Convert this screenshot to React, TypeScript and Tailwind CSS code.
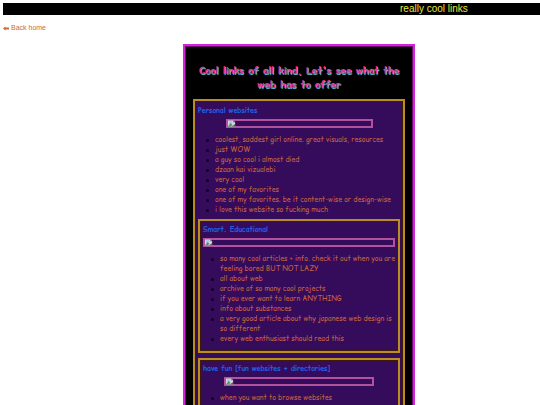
import React from "react";

function BrokenImage({ width }: { width: string }) {
  return (
    <div role="img" aria-label="button" className={`mx-auto h-[9px] border-2 border-[#b0529d] ${width}`}>
      <svg viewBox="0 0 9 7" className="block h-[7px] w-[8px] -mt-px">
        <path d="M0 0H6L8 2V7H0Z" fill="#d5dadd" />
        <path d="M1 1H5V3L3 4H1Z" fill="#a9c6ef" />
        <path d="M0 7L3 3L5 5L3 7Z" fill="#4b9954" />
        <path d="M6 0L8 2H6ZM4 7L8 4V7Z" fill="#58606a" />
      </svg>
    </div>
  );
}

function Links({ items }: { items: string[][] }) {
  return (
    <ul className="mt-[7px] list-none pl-[17px]">
      {items.map((lines) => (
        <li key={lines[0]} className="relative text-[7px] leading-[10px] whitespace-nowrap">
          <span className="absolute top-[4px] -left-[9px] size-[3px] rounded-full bg-[#12001f]" />
          <a href="#" className="text-[#c4623f]">
            {lines.map((line) => (
              <span key={line} className="block">{line}</span>
            ))}
          </a>
        </li>
      ))}
    </ul>
  );
}

const boxClass = "border-2 border-[#b98d22] bg-[#350b5c] px-[3px] outline outline-[#3d1a08] -outline-offset-3";
const titleClass = "text-[7px] leading-[10px] font-bold text-[#1f5fe0]";

export default function App() {
  return (
    <div className="h-screen overflow-hidden bg-white pt-[3px] pl-[3px] font-['Liberation_Sans',Arial,sans-serif]">
      <header className="h-[12px] bg-black pl-[397px] text-[10px] leading-[12px] whitespace-nowrap text-[#e6e63c]">
        really cool links
      </header>
      <nav className="mt-[8px] h-[10px] text-[7px] leading-[10px]">
        <a href="#" className="flex items-center gap-[2px] text-[#c96b35]">
          <svg viewBox="0 0 6 5" className="h-[5px] w-[6px]" fill="currentColor">
            <path d="M0 2.5L2.5 .5V1.5H6V3.5H2.5V4.5Z" />
          </svg>
          Back home
        </a>
      </nav>
      <main className="mt-[11px] ml-[180px] w-[232px] border-2 border-[#d424d8] bg-black px-[8px] pt-[17px] font-['Comic_Sans_MS','Comic_Relief',cursive] outline outline-[#6d0b70] -outline-offset-3">
        <h1 className="text-center text-[10px] leading-[14px] font-bold text-[#f0308f] [text-shadow:1px_1px_0_#4fb0c4]">
          <span className="block whitespace-nowrap">Cool links of all kind. Let's see what the</span>
          <span className="block">web has to offer</span>
        </h1>
        <section className={`mt-[8px] pt-[5px] ${boxClass}`}>
          <h2 className={titleClass}>Personal websites</h2>
          <div className="mt-[3px]">
            <BrokenImage width="w-[147px]" />
          </div>
          <Links
            items={[
              ["coolest, saddest girl online. great visuals, resources"],
              ["just WOW"],
              ["a guy so cool i almost died"],
              ["dzaan kai vizualebi"],
              ["very cool"],
              ["one of my favorites"],
              ["one of my favorites. be it content-wise or design-wise"],
              ["i love this website so fucking much"],
            ]}
          />
          <section className={`mt-[4px] pt-[4px] pb-[7px] ${boxClass}`}>
            <h2 className={titleClass}>Smart. Educational</h2>
            <div className="mt-[3px]">
              <BrokenImage width="w-full" />
            </div>
            <Links
              items={[
                ["so many cool articles + info. check it out when you are", "feeling bored BUT NOT LAZY"],
                ["all about web"],
                ["archive of so many cool projects"],
                ["if you ever want to learn ANYTHING"],
                ["info about substances"],
                ["a very good article about why japanese web design is", "so different"],
                ["every web enthusiast should read this"],
              ]}
            />
          </section>
          <section className={`mt-[5px] pt-[4px] pb-[7px] ${boxClass}`}>
            <h2 className={titleClass}>have fun [fun websites + directories]</h2>
            <div className="mt-[3px]">
              <BrokenImage width="w-[150px]" />
            </div>
            <Links items={[["when you want to browse websites"]]} />
          </section>
        </section>
      </main>
    </div>
  );
}
